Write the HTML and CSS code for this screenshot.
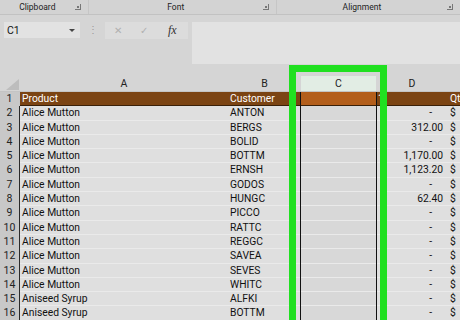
FILE: index.html
```html
<!DOCTYPE html>
<html lang="en">
<head>
    <meta charset="UTF-8">
    <title>Sheet - select column C</title>
    <link rel="stylesheet" href="styles.css">
</head>
<body>
    <div class="ribbon-groups">
        <div class="group g-clip"><span class="glabel">Clipboard</span><span class="launcher"></span></div>
        <div class="group g-font"><span class="glabel">Font</span><span class="launcher"></span></div>
        <div class="group g-align"><span class="glabel">Alignment</span><span class="launcher"></span></div>
    </div>

    <div class="formula-bar">
        <div class="name-box"><span>C1</span><span class="drop"></span></div>
        <div class="grip">&#8942;</div>
        <div class="fx-box">
            <span class="fx-btn">&#10005;</span>
            <span class="fx-btn">&#10003;</span>
            <span class="fx">fx</span>
        </div>
        <div class="formula-input"></div>
    </div>

    <div class="sheet">
        <div class="row col-heads">
            <div class="corner"><span class="tri"></span></div>
            <div class="ch a">A</div>
            <div class="ch b">B</div>
            <div class="ch c sel">C</div>
            <div class="ch d">D</div>
            <div class="ch e"></div>
        </div>
        <div class="row head-row">
            <div class="rh">1</div>
            <div class="cell a">Product</div>
            <div class="cell b">Customer</div>
            <div class="cell c"></div>
            <div class="cell d left">1</div>
            <div class="cell e">Qt</div>
        </div>
        <div class="row"><div class="rh">2</div><div class="cell a">Alice Mutton</div><div class="cell b">ANTON</div><div class="cell c"></div><div class="cell d dash">-</div><div class="cell e">$</div></div>
        <div class="row"><div class="rh">3</div><div class="cell a">Alice Mutton</div><div class="cell b">BERGS</div><div class="cell c"></div><div class="cell d">312.00</div><div class="cell e">$</div></div>
        <div class="row"><div class="rh">4</div><div class="cell a">Alice Mutton</div><div class="cell b">BOLID</div><div class="cell c"></div><div class="cell d dash">-</div><div class="cell e">$</div></div>
        <div class="row"><div class="rh">5</div><div class="cell a">Alice Mutton</div><div class="cell b">BOTTM</div><div class="cell c"></div><div class="cell d">1,170.00</div><div class="cell e">$</div></div>
        <div class="row"><div class="rh">6</div><div class="cell a">Alice Mutton</div><div class="cell b">ERNSH</div><div class="cell c"></div><div class="cell d">1,123.20</div><div class="cell e">$</div></div>
        <div class="row"><div class="rh">7</div><div class="cell a">Alice Mutton</div><div class="cell b">GODOS</div><div class="cell c"></div><div class="cell d dash">-</div><div class="cell e">$</div></div>
        <div class="row"><div class="rh">8</div><div class="cell a">Alice Mutton</div><div class="cell b">HUNGC</div><div class="cell c"></div><div class="cell d">62.40</div><div class="cell e">$</div></div>
        <div class="row"><div class="rh">9</div><div class="cell a">Alice Mutton</div><div class="cell b">PICCO</div><div class="cell c"></div><div class="cell d dash">-</div><div class="cell e">$</div></div>
        <div class="row"><div class="rh">10</div><div class="cell a">Alice Mutton</div><div class="cell b">RATTC</div><div class="cell c"></div><div class="cell d dash">-</div><div class="cell e">$</div></div>
        <div class="row"><div class="rh">11</div><div class="cell a">Alice Mutton</div><div class="cell b">REGGC</div><div class="cell c"></div><div class="cell d dash">-</div><div class="cell e">$</div></div>
        <div class="row"><div class="rh">12</div><div class="cell a">Alice Mutton</div><div class="cell b">SAVEA</div><div class="cell c"></div><div class="cell d dash">-</div><div class="cell e">$</div></div>
        <div class="row"><div class="rh">13</div><div class="cell a">Alice Mutton</div><div class="cell b">SEVES</div><div class="cell c"></div><div class="cell d dash">-</div><div class="cell e">$</div></div>
        <div class="row"><div class="rh">14</div><div class="cell a">Alice Mutton</div><div class="cell b">WHITC</div><div class="cell c"></div><div class="cell d dash">-</div><div class="cell e">$</div></div>
        <div class="row"><div class="rh">15</div><div class="cell a">Aniseed Syrup</div><div class="cell b">ALFKI</div><div class="cell c"></div><div class="cell d dash">-</div><div class="cell e">$</div></div>
        <div class="row"><div class="rh">16</div><div class="cell a">Aniseed Syrup</div><div class="cell b">BOTTM</div><div class="cell c"></div><div class="cell d dash">-</div><div class="cell e">$</div></div>
    </div>

    <!-- selection outline of column C and the green call-out box -->
    <div class="sel-outline"></div>
    <div class="highlight"></div>
</body>
</html>
```

FILE: styles.css
```css
body {
    position: relative;
    margin: 0;
    width: 460px;
    height: 320px;
    overflow: hidden;
    background: #d5d5d5;
    font-family: Roboto, "Liberation Sans", sans-serif;
    color: #111;
}

/* ribbon group labels */
.ribbon-groups {
    display: flex;
    height: 14px;
    border-bottom: 1px solid #c2c2c2;
    background: #d3d3d3;
}
.group {
    display: flex;
    align-items: center;
    border-right: 1px solid #c6c6c6;
}
.g-clip { width: 88px; }
.g-font { width: 188px; }
.g-align { width: 184px; border-right: none; }
.glabel {
    flex: 1;
    text-align: center;
    font-size: 8.5px;
    color: #222;
}
.launcher {
    position: relative;
    width: 5px;
    height: 5px;
    margin-right: 7px;
    border-right: 1px solid #777;
    border-bottom: 1px solid #777;
}
.launcher::after {
    content: "";
    position: absolute;
    right: 1px;
    bottom: 1px;
    width: 2px;
    height: 2px;
    background: #777;
}

/* name box + formula bar */
.formula-bar {
    display: flex;
    align-items: flex-start;
    height: 54px;
    padding-top: 7px;
}
.name-box {
    display: flex;
    align-items: center;
    justify-content: space-between;
    width: 76px;
    height: 16px;
    margin-left: 4px;
    padding: 0 5px 0 3px;
    box-sizing: border-box;
    background: #e2e2e2;
    font-size: 10.5px;
}
.drop {
    width: 0;
    height: 0;
    border-left: 3px solid transparent;
    border-right: 3px solid transparent;
    border-top: 3px solid #444;
}
.grip {
    width: 25px;
    height: 16px;
    line-height: 16px;
    text-align: center;
    font-size: 10px;
    color: #999;
}
.fx-box {
    display: flex;
    align-items: center;
    width: 83px;
    height: 17px;
    background: #dcdcdc;
}
.fx-btn {
    width: 27px;
    text-align: center;
    font-size: 10px;
    color: #b0b0b0;
}
.fx {
    width: 33px;
    text-align: center;
    font-family: "Liberation Serif", serif;
    font-style: italic;
    font-size: 12px;
    color: #333;
}
.formula-input {
    flex: 1;
    height: 42px;
    margin-left: 4px;
    background: #e2e2e2;
}

/* worksheet */
.row {
    display: flex;
    height: 14.3px;
    font-size: 10.3px;
    line-height: 14px;
}
.col-heads {
    height: 15px;
    line-height: 15px;
    background: #d5d5d5;
    border-bottom: 1px solid #c4c4c4;
}
.corner {
    position: relative;
    width: 20px;
}
.tri {
    position: absolute;
    right: 1px;
    bottom: 1px;
    width: 0;
    height: 0;
    border-left: 13px solid transparent;
    border-bottom: 11px solid #bdbdbd;
}
.ch {
    text-align: center;
    font-size: 10.5px;
    color: #222;
}
.ch.sel { background: #e2ede4; }

.rh {
    width: 19px;
    text-align: center;
    background: #c8c8c8;
    border-right: 1.5px solid #2a2a2a;
    font-size: 10.5px;
    color: #222;
}
.head-row .rh { border-right-color: #c8c8c8; }

.cell {
    box-sizing: border-box;
    padding-left: 2px;
    white-space: nowrap;
    overflow: hidden;
    background: #dfdfdf;
    border-bottom: 1px solid #eaeaea;
}
.a { width: 208px; }
.b { width: 73px; }
.c { width: 75px; }
.d { width: 72px; }
.e { flex: 1; }

.cell.c { background: #d8d8d8; }
.cell.d { text-align: right; padding-right: 5px; }
.cell.d.dash { padding-right: 16px; }
.cell.d.left { text-align: left; }

.head-row .cell {
    background: #7b4413;
    color: #fff;
    border-bottom: 1px solid #3a2008;
}
.head-row .cell.c { background: #b35e1b; }

.sel-outline {
    position: absolute;
    left: 300px;
    top: 92px;
    bottom: 0;
    width: 77px;
    box-sizing: border-box;
    border-left: 1.5px solid #111;
    border-right: 1.5px solid #111;
}
.highlight {
    position: absolute;
    left: 289px;
    top: 65px;
    bottom: 0;
    width: 98px;
    box-sizing: border-box;
    border: 7px solid #20e020;
    border-bottom: none;
}
```
